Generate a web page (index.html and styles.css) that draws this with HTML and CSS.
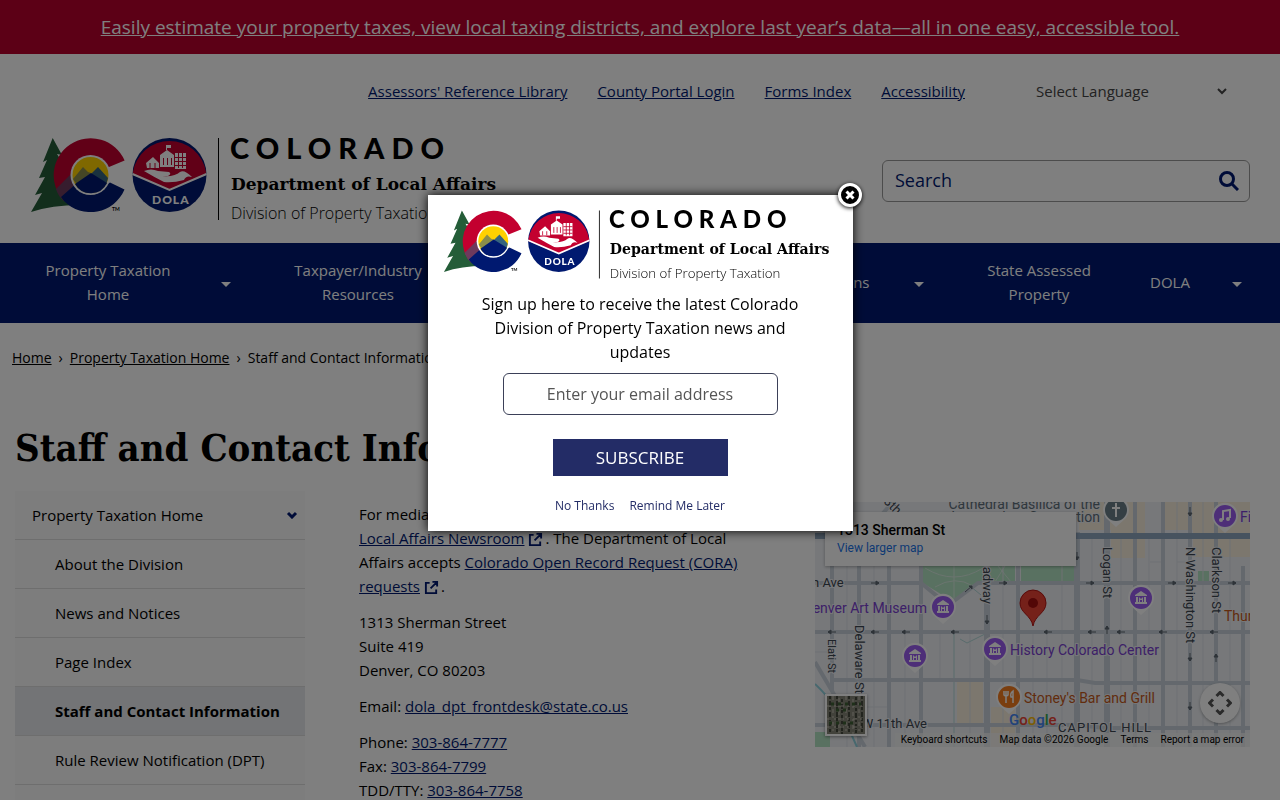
FILE: index.html
```html
<!DOCTYPE html>
<html lang="en">
<head>
    <meta charset="UTF-8">
    <meta name="viewport" content="width=device-width, initial-scale=1.0">
    <title>Staff and Contact Information | Division of Property Taxation</title>
    <link rel="stylesheet" href="styles.css">
</head>
<body>
    <!-- Shared SVG symbols -->
    <svg class="sprite" aria-hidden="true">
        <symbol id="logo" viewBox="0 0 476 88">
            <path fill="#245d38" d="M22.700 3 L32 20 L27 19 L38 36 L34 36 L50 70 Q22 70 1 77 L12 58 L5 60 L15 42 L9 43 L17 25 L13 27 Z"/>
            <path fill="#c3002f" d="M94.600 25.600 A37 37 0 1 0 34 66 L61 40 L79 32 Z"/>
            <path fill="#6d3a5d" d="M26 54 L43 37 L48 48 L34 66 Q28 61 26 54 Z"/>
            <path fill="#001970" d="M34 66 L31 62 L48 47 L61 59 L80 47.500 L94.500 54.500 A37 37 0 0 1 34 66 Z"/>
            <circle cx="60.500" cy="40" r="20" fill="#fff"/>
            <circle cx="60.500" cy="40" r="18" fill="#ffd100"/>
            <path fill="#8a8d4a" d="M43 44 L53 32 L58 37 L61 38 L50 54 Z"/>
            <path fill="#35647e" d="M61 39 L68 32 L78 43 L76 50 Z"/>
            <path fill="#001970" d="M45 49 L61 38 L77 48 A18 18 0 0 1 45 49 Z"/>
            <circle cx="139.500" cy="40" r="37" fill="#001970"/>
            <path fill="#c3002f" d="M103 37 A37 37 0 0 1 176 37 L176 40 L139.500 55 L103 40 Z"/>
            <path fill="none" stroke="#fff" stroke-width="2" d="M102.500 39 L139.500 55 L176.500 39"/>
            <!-- buildings held in a hand -->
            <path fill="#fff" d="M116 28 L123 22 L129 28 V33 H117 Z M130 20 L137 15 L144 20 V32 H130 Z M136 10 H137 V15 H136 Z M137 10 H141 V13 H137 Z M145 18 H156 V34 H145 Z"/>
            <path stroke="#c3002f" fill="none" d="M120 33 V28 M125 33 V28 M133.500 30 V23 M137.500 30 V23 M141.500 30 V23 M148.500 18 V33 M152.500 18 V33 M145 22.500 H156 M145 26.500 H156 M145 30.500 H156"/>
            <path fill="#fff" d="M114 36 Q121 33 128 36 L139 37 Q142 39 138 41 L132 41 Q145 42 150 37 Q154 34 162 42 Q156 40 154 45 Q143 48 134 47 Q124 42 114 36 Z"/>
            <text class="logo-dola" x="122" y="69">DOLA</text>
            <text class="logo-tm" x="82" y="76">TM</text>
            <path stroke="#000" d="M188.500 3 V85"/>
            <text class="logo-state" x="200" y="24">COLORADO</text>
            <text class="logo-dept" x="201" y="55">Department of Local Affairs</text>
            <text class="logo-div" x="201" y="84">Division of Property Taxation</text>
        </symbol>
        <symbol id="external" viewBox="0 0 16 16">
            <path fill="none" stroke="currentColor" stroke-width="2" d="M6 3 H2 V14 H13 V10 M9 2 H14 V7 M14 2 L7 9"/>
        </symbol>
        <symbol id="caret" viewBox="0 0 10 5">
            <path fill="currentColor" d="M0 0 H10 L5 5 Z"/>
        </symbol>
        <symbol id="chevron" viewBox="0 0 12 8">
            <path fill="none" stroke="currentColor" d="M2 2 L6 6 L10 2"/>
        </symbol>
        <symbol id="museum-pin" viewBox="-14 -14 28 34">
            <path fill="#fff" d="M0 17 L-10 8 A13 13 0 1 1 10 8 Z"/>
            <circle r="11" fill="#9a5cf0"/>
            <path fill="#fff" d="M-6 -3 L0 -7 L6 -3 V-2 H-6 Z M-5 -1 H-3 V4 H-5 Z M3 -1 H5 V4 H3 Z M-6 4 H6 V6 H-6 Z M-2 -1 L0 1 L2 -1 V4 H1 V2 H-1 V4 H-2 Z"/>
        </symbol>
    </svg>

    <div class="alert-banner">
        <a href="#">Easily estimate your property taxes, view local taxing districts, and explore last year’s data—all in one easy, accessible tool.</a>
    </div>

    <header class="header">
        <div class="utility">
            <nav class="utility-links" aria-label="Utility">
                <a href="#">Assessors' Reference Library</a>
                <a href="#">County Portal Login</a>
                <a href="#">Forms Index</a>
                <a href="#">Accessibility</a>
            </nav>
            <div class="language">
                <select aria-label="Select Language">
                    <option>Select Language</option>
                </select>
                <svg><use href="#chevron"/></svg>
            </div>
        </div>
        <div class="brand-row">
            <a href="#" class="brand" aria-label="Division of Property Taxation"><svg><use href="#logo"/></svg></a>
            <form class="search">
                <input type="text" placeholder="Search" aria-label="Search">
                <button type="button" aria-label="Submit search">
                    <svg viewBox="0 0 20 20"><circle cx="8" cy="8" r="6.500"/><path d="M13 13 L19 19"/></svg>
                </button>
            </form>
        </div>
    </header>

    <nav class="main-nav" aria-label="Main">
        <div class="nav-item">
            <a href="#">Property Taxation Home</a>
            <button aria-label="Expand Property Taxation Home"><svg><use href="#caret"/></svg></button>
        </div>
        <div class="nav-item">
            <a href="#">Taxpayer/Industry Resources</a>
            <button aria-label="Expand Taxpayer/Industry Resources"><svg><use href="#caret"/></svg></button>
        </div>
        <div class="nav-item">
            <a href="#">Assessors</a>
            <button aria-label="Expand Assessors"><svg><use href="#caret"/></svg></button>
        </div>
        <div class="nav-item">
            <a href="#">Publications</a>
            <button aria-label="Expand Publications"><svg><use href="#caret"/></svg></button>
        </div>
        <div class="nav-item nav-item-plain">
            <a href="#">State Assessed Property</a>
        </div>
        <div class="nav-item">
            <a href="#">DOLA</a>
            <button aria-label="Expand DOLA"><svg><use href="#caret"/></svg></button>
        </div>
    </nav>

    <nav class="breadcrumb" aria-label="Breadcrumb">
        <a href="#">Home</a><span>›</span><a href="#">Property Taxation Home</a><span>›</span>Staff and Contact Information
    </nav>

    <main class="main">
        <h1>Staff and Contact Information</h1>
        <div class="columns">
            <aside class="sidebar">
                <div class="sidebar-top">
                    <a href="#">Property Taxation Home</a>
                    <button aria-label="Collapse menu"><svg><use href="#chevron"/></svg></button>
                </div>
                <ul>
                    <li><a href="#">About the Division</a></li>
                    <li><a href="#">News and Notices</a></li>
                    <li><a href="#">Page Index</a></li>
                    <li><a href="#" class="active">Staff and Contact Information</a></li>
                    <li><a href="#">Rule Review Notification (DPT)</a></li>
                    <li><a href="#">Contact Us</a></li>
                </ul>
            </aside>

            <section class="contact">
                <p>For media inquiries, please visit the Department of <a href="#">Local Affairs Newsroom</a><svg class="ext"><use href="#external"/></svg>. The Department of Local Affairs accepts <a href="#">Colorado Open Record Request (CORA) requests</a><svg class="ext"><use href="#external"/></svg>.</p>
                <p>1313 Sherman Street<br>Suite 419<br>Denver, CO 80203</p>
                <p>Email: <a href="#">dola_dpt_frontdesk@state.co.us</a></p>
                <p>Phone: <a href="#">303-864-7777</a><br>Fax: <a href="#">303-864-7799</a><br>TDD/TTY: <a href="#">303-864-7758</a></p>
            </section>

            <section class="map" aria-label="Map">
                <svg class="map-canvas" viewBox="0 0 435 245" preserveAspectRatio="xMinYMin slice">
                    <rect width="435" height="245" fill="#eef0f4"/>
                    <path fill="#f8efdc" d="M264 0 H330 V56 H296 V28 H264 Z M350 0 H435 V55 H378 V28 H350 Z M142 178 H168 V222 H142 Z M176 205 H200 V245 H176 Z"/>
                    <!-- parks -->
                    <path fill="#b3e2c2" d="M106 64 H200 V80 H162 L139 100 L106 80 Z M206 64 H259 V80 H206 Z M383 69 H394 V80 H383 Z M0 230 H15 V245 H0 Z"/>
                    <path stroke="#d6eadf" fill="none" d="M139 64 V98 M110 66 Q139 84 168 66 M120 85 Q140 73 158 84 M183 64 L196 80 M180 80 L190 64"/>
                    <!-- alleys and lots -->
                    <path class="alley" d="M32 64 V245 M59 64 V245 M90 130 V245 M125 130 V178 M155 130 V245 M188 64 V245 M218 130 V245 M232 130 V245 M247 64 V245 M277 34 V245 M306 34 V245 M334 34 V245 M362 0 V245 M388 0 V245 M415 34 V245 M335 60 H348 M362 60 H375 M0 150 H17 M44 205 H74"/>
                    <path stroke="#b3d8d9" fill="none" d="M139 130 V245 M145 137 L152 141 L172 131 M155 84 L166 93"/>
                    <!-- streets -->
                    <path class="street" d="M0 81 H106 L128 99 M139 99 L163 81 H435 M0 130 H435 M17 178 H262 L280 181 H435 M0 223 H262 L290 226 H435 M74 64 V245 M44 64 V245 M106 64 V245 M203 64 V245 M320 0 V245 M348 0 V245 M375 0 V245 M401 0 V245 M428 64 V245"/>
                    <path class="street wide" d="M172 55 V245 M262 30 V245 M292 0 V245"/>
                    <path class="street" d="M17 64 V190 M60 20 L78 0 M0 160 L50 245"/>
                    <path fill="none" stroke="#8ed1dd" stroke-width="2" d="M0 182 Q25 205 42 245"/>
                    <path stroke="#8fa6be" stroke-width="6" d="M0 34 H435"/>
                    <!-- one-way arrows -->
                    <path class="arrow" d="M56 81 H64 l-3 -2 v4 l3 -2 M184 81 H192 l-3 -2 v4 l3 -2 M271 81 H279 l-3 -2 v4 l3 -2 M353 81 H361 l-3 -2 v4 l3 -2 M413 81 H421 l-3 -2 v4 l3 -2 M21 130 H13 l3 -2 v4 l-3 -2 M64 130 H56 l3 -2 v4 l-3 -2 M95 130 H87 l3 -2 v4 l-3 -2 M144 130 H136 l3 -2 v4 l-3 -2 M237 130 H229 l3 -2 v4 l-3 -2 M281 130 H273 l3 -2 v4 l-3 -2 M310 130 H302 l3 -2 v4 l-3 -2 M352 130 H344 l3 -2 v4 l-3 -2 M403 130 H395 l3 -2 v4 l-3 -2 M172 113 V122 l-2 -3 h4 l-2 3 M262 50 V58 l-2 -3 h4 l-2 3 M375 5 V14 l-2 -3 h4 l-2 3 M375 151 V159 l-2 -3 h4 l-2 3 M375 200 V208 l-2 -3 h4 l-2 3 M292 132 V124 l-2 3 h4 l-2 -3 M401 160 V152 l-2 3 h4 l-2 -3 M150 90 L157 84 h-3 l3 3 v-3"/>
                    <g class="map-road">
                        <text x="-3" y="85">h Ave</text>
                        <text x="112" y="226" text-anchor="end">W 11th Ave</text>
                        <text transform="translate(288 45) rotate(90)">Logan St</text>
                        <text transform="translate(371 45) rotate(90)">N Washington St</text>
                        <text transform="translate(397 45) rotate(90)">Clarkson St</text>
                        <text transform="translate(168 102) rotate(90)" text-anchor="end">Broadway</text>
                        <text transform="translate(40 123) rotate(90)">Delaware St</text>
                        <text class="small" transform="translate(13 137) rotate(90)">Elati St</text>
                        <text class="area" x="243" y="230">CAPITOL HILL</text>
                        <text transform="translate(68 0) rotate(45)">8th</text>
                    </g>
                    <g class="map-place">
                        <text class="grey" x="285" y="7" text-anchor="end">Cathedral Basilica of the</text>
                        <text class="grey" x="285" y="20" text-anchor="end">Immaculate Conception</text>
                        <text x="112" y="111" text-anchor="end">Denver Art Museum</text>
                        <text x="195" y="153">History Colorado Center</text>
                        <text x="425" y="20">Fillmore</text>
                        <text class="orange" x="209" y="201">Stoney's Bar and Grill</text>
                        <text class="orange" x="409" y="119">Thump</text>
                    </g>
                    <use href="#museum-pin" x="114" y="91" width="28" height="34"/>
                    <use href="#museum-pin" x="86" y="140" width="28" height="34"/>
                    <use href="#museum-pin" x="166" y="133" width="28" height="34"/>
                    <use href="#museum-pin" x="312" y="82" width="28" height="34"/>
                    <g transform="translate(301 8)">
                        <path fill="#fff" d="M0 17 L-10 8 A13 13 0 1 1 10 8 Z"/><circle r="11" fill="#6b7f88"/>
                        <path stroke="#fff" stroke-width="2" d="M0 -7 V7 M-4 -2 H4"/>
                    </g>
                    <g transform="translate(410 14)">
                        <path fill="#fff" d="M0 17 L-10 8 A13 13 0 1 1 10 8 Z"/><circle r="11" fill="#9a5cf0"/>
                        <path fill="none" stroke="#fff" stroke-width="2" d="M-2 4 V-5 L5 -6 V2"/><circle cx="-4" cy="4" r="2" fill="#fff"/><circle cx="3" cy="3" r="2" fill="#fff"/>
                    </g>
                    <g transform="translate(194 195)">
                        <path fill="#fff" d="M0 17 L-10 8 A13 13 0 1 1 10 8 Z"/><circle r="11" fill="#f57c1f"/>
                        <path fill="none" stroke="#fff" stroke-width="1.500" d="M-5 -6 V-2 Q-3 0 -1 -2 V-6 M-3 -6 V6 M4 6 V-6 Q1 -4 2 0 H4"/>
                    </g>
                    <path fill="#ea4335" stroke="#b31412" d="M218 124 C216 113 205 111 205 101 A13 13 0 0 1 231 101 C231 111 220 113 218 124 Z"/>
                    <circle cx="218" cy="101" r="5" fill="#a50e0e"/>
                    <text class="map-google" x="194" y="223"><tspan fill="#4285f4">G</tspan><tspan fill="#ea4335">o</tspan><tspan fill="#fbbc05">o</tspan><tspan fill="#4285f4">g</tspan><tspan fill="#34a853">l</tspan><tspan fill="#ea4335">e</tspan></text>
                </svg>
                <div class="map-card">
                    <strong>1313 Sherman St</strong>
                    <a href="#">View larger map</a>
                </div>
                <button class="map-thumb" aria-label="Show satellite imagery">
                    <svg viewBox="0 0 38 38"><rect width="38" height="38" fill="#858477"/><path stroke="#45493d" stroke-width="2" stroke-dasharray="3 2 5 1" d="M3 0 V38 M10 0 V38 M15 3 V38 M22 0 V38 M29 1 V38 M35 0 V38"/><path stroke="#c4c0b4" stroke-dasharray="4 3 2 4" d="M6 0 V38 M12 2 V38 M19 0 V38 M26 3 V38 M32 0 V38 M0 10 H38 M0 23 H38 M0 31 H38"/><path stroke="#3f6035" stroke-width="3" stroke-dasharray="3 4" d="M4 8 H34 M9 14 H20 M2 27 H30"/></svg>
                </button>
                <button class="map-camera" aria-label="Map camera controls">
                    <svg viewBox="0 0 24 24"><path d="M8.500 5 L12 1.500 L15.500 5 M8.500 19 L12 22.500 L15.500 19 M5 8.500 L1.500 12 L5 15.500 M19 8.500 L22.500 12 L19 15.500"/></svg>
                </button>
                <div class="map-footer">
                    <a href="#">Keyboard shortcuts</a>
                    <span>Map data ©2026 Google</span>
                    <a href="#">Terms</a>
                    <a href="#">Report a map error</a>
                </div>
            </section>
        </div>
    </main>

    <!-- Newsletter sign up dialog -->
    <div class="overlay">
        <div class="modal" role="dialog" aria-label="Newsletter sign up">
            <button class="modal-close" aria-label="Close">
                <svg viewBox="0 0 10 10"><path d="M1.500 1.500 L8.500 8.500 M8.500 1.500 L1.500 8.500"/></svg>
            </button>
            <svg class="modal-logo"><use href="#logo"/></svg>
            <p><label for="email">Sign up here to receive the latest Colorado Division of Property Taxation news and updates</label></p>
            <input type="email" id="email" placeholder="Enter your email address">
            <button class="subscribe">SUBSCRIBE</button>
            <div class="modal-links">
                <a href="#">No Thanks</a>
                <a href="#">Remind Me Later</a>
            </div>
        </div>
    </div>
</body>
</html>
```
FILE: styles.css
```css
* {
    box-sizing: border-box;
}
body {
    margin: 0;
    height: 100vh;
    overflow: hidden;
    background: #fff;
    color: #000;
    font-family: 'Trebuchet MS', 'Open Sans', sans-serif;
    font-size: 15px;
    line-height: 24px;
}
a {
    color: #001970;
}
button {
    padding: 0;
    border: none;
    background: none;
    cursor: pointer;
}
.sprite {
    display: none;
}

/* logo lettering */
.logo-state {
    font: 900 29px Lato, sans-serif;
    letter-spacing: 7px;
}
.logo-dept {
    font: bold 17px 'DejaVu Serif', serif;
}
.logo-div {
    font: 300 16px 'Open Sans', sans-serif;
}
.logo-dola {
    font: 900 12px Lato, sans-serif;
    letter-spacing: 1px;
    fill: #fff;
}
.logo-tm {
    font: bold 5px Lato, sans-serif;
}

/* banner */
.alert-banner {
    padding: 15px 20px;
    background: #b8002c;
    text-align: center;
    font-size: 19px;
    font-weight: 500;
}
.alert-banner a {
    color: #fff;
}

/* header */
.header {
    height: 189px;
    padding: 18px 30px 0;
}
.utility {
    display: flex;
    justify-content: flex-end;
    align-items: center;
    gap: 59px;
    height: 37px;
}
.utility-links {
    display: flex;
    gap: 30px;
}
.language {
    display: flex;
    align-items: center;
    position: relative;
    width: 226px;
}
.language select {
    width: 100%;
    padding: 0 12px;
    border: none;
    background: none;
    appearance: none;
    color: #444;
    font: inherit;
}
.language svg {
    position: absolute;
    right: 22px;
    width: 12px;
    height: 8px;
    color: #444;
    stroke-width: 2;
}
.brand-row {
    display: flex;
    justify-content: space-between;
    padding-top: 26px;
}
.brand svg {
    display: block;
    width: 476px;
    height: 88px;
}
.search {
    display: flex;
    align-items: center;
    width: 368px;
    height: 42px;
    margin-top: 25px;
    padding: 0 10px 0 12px;
    border: 1px solid #999;
    border-radius: 6px;
}
.search input {
    flex: 1;
    min-width: 0;
    padding: 0 0 2px;
    border: none;
    outline: none;
    background: none;
    font: 500 18px 'Trebuchet MS', 'Open Sans', sans-serif;
}
.search input::placeholder {
    color: #001970;
    opacity: 1;
}
.search svg {
    display: block;
    width: 20px;
    height: 20px;
    fill: none;
    stroke: #001970;
    stroke-width: 3;
}

/* main navigation */
.main-nav {
    display: grid;
    grid-template-columns: 250fr 250fr 245fr 198fr 170fr 148fr;
    height: 80px;
    padding-right: 19px;
    background: #001970;
}
.nav-item {
    display: flex;
    align-items: center;
    padding: 0 0 2px 14px;
}
.nav-item-plain {
    padding-left: 22px;
}
.nav-item a {
    flex: 1;
    padding: 0 24px;
    color: #fff;
    text-align: center;
    text-decoration: none;
}
.nav-item-plain a {
    padding: 0 20px;
}
.nav-item:last-child a {
    padding: 0;
}
.nav-item button {
    width: 48px;
    color: #fff;
}
.nav-item svg {
    width: 10px;
    height: 5px;
}

.breadcrumb {
    padding: 23px 12px;
    font-size: 14px;
}
.breadcrumb a {
    color: #000;
}
.breadcrumb span {
    padding: 0 7px;
}

/* page content */
.main {
    padding: 26px 30px 0 15px;
}
h1 {
    margin: 0;
    font: bold 38px/58px 'Museo Slab', 'DejaVu Serif Condensed', 'DejaVu Serif', serif;
}
.columns {
    display: grid;
    grid-template-columns: 290px 1fr 435px;
    margin-top: 14px;
}
.sidebar {
    background: #fafafa;
}
.sidebar-top {
    display: flex;
    justify-content: space-between;
    padding: 12px 7px 12px 17px;
    border-bottom: 1px solid #ddd;
}
.sidebar a {
    color: #000;
    text-decoration: none;
}
.sidebar-top svg {
    display: block;
    width: 12px;
    height: 8px;
    color: #001970;
    stroke-width: 3;
}
.sidebar ul {
    margin: 0;
    padding: 0;
    list-style: none;
}
.sidebar li a {
    display: block;
    padding: 12px 10px 12px 40px;
    border-bottom: 1px solid #ddd;
}
.sidebar .active {
    background: #e6e9ec;
    font-weight: bold;
}
.contact {
    padding: 11px 64px 0 54px;
}
.contact p {
    margin: 0 0 12px;
}
.ext {
    width: 15px;
    height: 15px;
    margin: 0 2px 0 4px;
    color: #001970;
    vertical-align: -3px;
}

/* map */
.map {
    position: relative;
    height: 245px;
    margin-top: 11px;
    overflow: hidden;
    font-family: Roboto, sans-serif;
}
.map-canvas {
    display: block;
    width: 100%;
    height: 100%;
}
.alley {
    fill: none;
    stroke: #dde2e8;
}
.street {
    fill: none;
    stroke: #c8d1da;
    stroke-width: 4;
}
.wide {
    stroke-width: 6;
}
.arrow {
    fill: #5c6670;
    stroke: #5c6670;
}
.map-road {
    font-size: 13px;
    fill: #3c4650;
    paint-order: stroke;
    stroke: #eef0f4;
    stroke-width: 2;
}
.map-road .small {
    font-size: 11px;
}
.map-road .area {
    letter-spacing: 1px;
}
.map-place {
    font-size: 14px;
    fill: #7a3fd0;
    paint-order: stroke;
    stroke: #eef0f4;
    stroke-width: 2;
}
.map-place .grey {
    font-size: 14px;
    fill: #5f6f7a;
}
.map-place .orange {
    fill: #c4591a;
}
.map-google {
    font: 500 15px Roboto, sans-serif;
}
.map-card {
    position: absolute;
    left: 10px;
    top: 10px;
    width: 251px;
    height: 54px;
    padding: 9px 12px;
    background: #fff;
    box-shadow: 0 1px 3px rgba(0,0,0,0.3);
    font-size: 12px;
    line-height: 18px;
}
.map-card strong {
    display: block;
    font-size: 14px;
    font-weight: 500;
}
.map-card a {
    color: #1a73e8;
    text-decoration: none;
}
.map-thumb {
    position: absolute;
    left: 10px;
    top: 192px;
    width: 42px;
    height: 42px;
    border: 2px solid #fff;
    box-shadow: 0 1px 3px rgba(0,0,0,0.4);
}
.map-thumb svg {
    display: block;
}
.map-camera {
    position: absolute;
    right: 10px;
    top: 181px;
    width: 40px;
    height: 40px;
    border-radius: 50%;
    background: #fff;
    box-shadow: 0 1px 3px rgba(0,0,0,0.3);
}
.map-camera svg {
    display: block;
    width: 24px;
    height: 24px;
    margin: auto;
    fill: none;
    stroke: #555;
    stroke-width: 3;
}
.map-footer {
    display: flex;
    gap: 12px;
    position: absolute;
    right: 0;
    bottom: 0;
    padding: 0 6px;
    background: rgba(245,245,245,0.7);
    font-size: 10px;
    line-height: 14px;
}
.map-footer a {
    color: #000;
    text-decoration: none;
}

/* newsletter dialog */
.overlay {
    display: flex;
    justify-content: center;
    align-items: flex-start;
    position: fixed;
    inset: 0;
    padding-top: 195px;
    background: rgba(0,0,0,0.5);
}
.modal {
    display: flex;
    flex-direction: column;
    align-items: center;
    position: relative;
    width: 425px;
    padding: 13px 14px;
    background: #fff;
    box-shadow: 0 0 10px #000;
    font-family: 'Open Sans', sans-serif;
    text-align: center;
}
.modal-logo {
    width: 397px;
    height: 73px;
}
.modal p {
    width: 340px;
    margin: 11px 0 9px;
    font-size: 16px;
}
.modal input {
    width: 275px;
    height: 42px;
    border: 1px solid #3b4058;
    border-radius: 6px;
    font: 16px 'Open Sans', sans-serif;
    text-align: center;
}
.modal input::placeholder {
    color: #555;
    opacity: 1;
}
.subscribe {
    width: 175px;
    height: 37px;
    margin: 24px 0 18px;
    background: #232c66;
    color: #fff;
    font: 17px 'Open Sans', sans-serif;
}
.modal-links {
    display: flex;
    gap: 15px;
    font-size: 12px;
}
.modal-links a {
    color: #232c66;
    text-decoration: none;
}
.modal-close {
    display: flex;
    justify-content: center;
    align-items: center;
    position: absolute;
    right: -9px;
    top: -12px;
    width: 24px;
    height: 24px;
    border: 3px solid #fff;
    border-radius: 50%;
    background: #000;
    box-shadow: 0 1px 4px #000;
}
.modal-close svg {
    width: 10px;
    height: 10px;
    stroke: #fff;
    stroke-width: 3;
}
```
